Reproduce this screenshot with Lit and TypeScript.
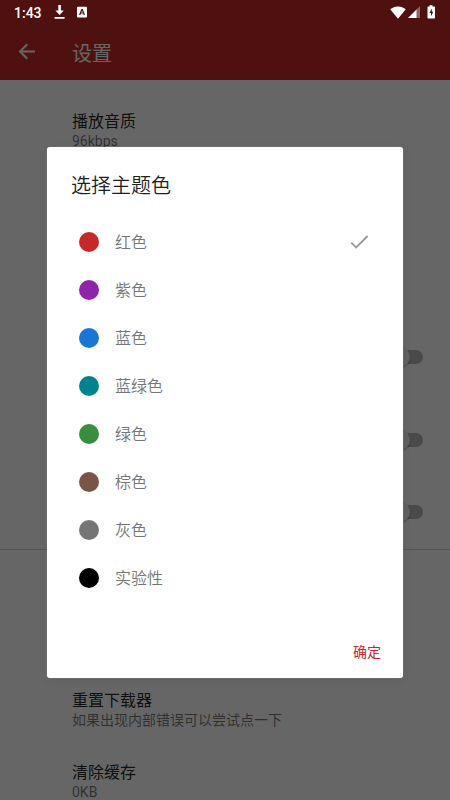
import { LitElement, html, css, nothing } from "lit";
import { customElement, property, state } from "lit/decorators.js";

interface ThemeColor {
  name: string;
  value: string;
}

const THEME_COLORS: ThemeColor[] = [
  { name: "红色", value: "#c62828" },
  { name: "紫色", value: "#8e24aa" },
  { name: "蓝色", value: "#1976d2" },
  { name: "蓝绿色", value: "#00838f" },
  { name: "绿色", value: "#388e3c" },
  { name: "棕色", value: "#795548" },
  { name: "灰色", value: "#757575" },
  { name: "实验性", value: "#000000" },
];

@customElement("status-bar")
class StatusBar extends LitElement {
  static styles = css`
    :host {
      display: flex;
      align-items: center;
      height: 24px;
      padding: 0 14px;
      color: #fff;
    }
    .time {
      font-size: 14px;
      font-weight: 500;
      line-height: 24px;
      width: 40px;
      padding-top: 2px;
    }
    .spacer {
      flex: 1;
    }
    svg {
      display: block;
      fill: currentColor;
    }
    .download {
      margin-right: 12px;
    }
    .wifi {
      margin-right: 2px;
    }
    .signal {
      margin-right: 7px;
    }
  `;
  render() {
    return html`
      <span class="time">1:43</span>
      <svg class="download" width="11" height="14" viewBox="0 0 11 14">
        <path d="M4.3 0h2.6v5.4h2.9L5.6 10 1.4 5.4h2.9zM.6 12h10v1.7H.6z" />
      </svg>
      <svg width="10" height="12" viewBox="0 0 10 12">
        <path
          fill-rule="evenodd"
          d="M1 .8h8a1 1 0 0 1 1 1v8.6a1 1 0 0 1-1 1H1a1 1 0 0 1-1-1V1.800a1 1 0 0 1 1-1zM4.300 3 2 9h1.400l.5-1.400h2.300L6.700 9H8L5.800 3zM5 4.400l.8 2.200H4.300z"
        />
      </svg>
      <span class="spacer"></span>
      <svg class="wifi" width="16" height="13" viewBox="0 0 16 13">
        <path d="M8 12.700.2 3.300C2.400 1.400 5 .4 8 .4s5.600 1 7.800 2.900z" />
      </svg>
      <svg class="signal" width="12" height="12" viewBox="0 0 12 12">
        <path opacity=".35" d="M12 0v12H8V4z" />
        <path d="M8.500 3.500V12H0z" />
      </svg>
      <svg width="9" height="14" viewBox="0 0 9 14">
        <path
          fill-rule="evenodd"
          d="M2.500.2h3v1.300h1.700a.8.8 0 0 1 .8.8v10.400a.8.8 0 0 1-.8.8H1.300a.8.8 0 0 1-.8-.8V2.300a.8.8 0 0 1 .8-.8h1.200zM4.800 3.600 2.400 8h1.600v3.200l2.400-4.400H4.800z"
        />
      </svg>
    `;
  }
}

@customElement("setting-row")
class SettingRow extends LitElement {
  @property() heading = "";
  @property() detail = "";
  @property({ type: Boolean }) toggle = false;

  static styles = css`
    :host {
      display: flex;
      align-items: center;
      justify-content: space-between;
      box-sizing: border-box;
      height: 72px;
      padding: 0 25px 0 72px;
    }
    .heading {
      padding-top: 1px;
      font-size: 16px;
      line-height: 20px;
      color: rgba(0, 0, 0, 0.87);
    }
    .detail {
      font-size: 14px;
      line-height: 19px;
      color: rgba(0, 0, 0, 0.54);
    }
    .track {
      display: flex;
      align-items: center;
      width: 34px;
      height: 14px;
      margin-right: 2px;
      border-radius: 7px;
      background: #b9b9b9;
    }
    .thumb {
      width: 20px;
      height: 20px;
      margin-left: 1px;
      flex: none;
      border-radius: 50%;
      background: #f1f1f1;
      box-shadow: 0 1px 2px rgba(0, 0, 0, 0.3);
    }
  `;
  render() {
    return html`
      <div>
        <div class="heading">${this.heading}</div>
        <div class="detail">${this.detail}</div>
      </div>
      ${this.toggle
        ? html`<div class="track"><div class="thumb"></div></div>`
        : nothing}
    `;
  }
}

@customElement("theme-dialog")
class ThemeDialog extends LitElement {
  @state() selected = 0;

  static styles = css`
    :host {
      display: flex;
      flex-direction: column;
      box-sizing: border-box;
      width: 356px;
      height: 531px;
      border-radius: 3px;
      background: #fff;
      box-shadow: 0 0 1px rgba(255, 255, 255, 0.5), 0 2px 10px rgba(0, 0, 0, 0.06);
    }
    .title {
      padding: 24px 24px 17px;
      font-size: 20px;
      font-weight: 350;
      line-height: 30px;
      color: #212121;
    }
    .option {
      display: flex;
      align-items: center;
      height: 48px;
      padding: 0 34px 0 32px;
    }
    .swatch {
      width: 20px;
      height: 20px;
      margin-right: 16px;
      border-radius: 50%;
    }
    .name {
      flex: 1;
      padding-top: 2px;
      font-size: 16px;
      font-weight: 350;
      line-height: 24px;
      color: #757575;
    }
    .check {
      fill: none;
      stroke: #999;
      stroke-width: 1.8;
    }
    .actions {
      display: flex;
      justify-content: flex-end;
      margin-top: auto;
      padding: 0 22px 15px;
    }
    .confirm {
      font-size: 14px;
      line-height: 22px;
      color: #c62828;
    }
  `;
  render() {
    return html`
      <div class="title">选择主题色</div>
      ${THEME_COLORS.map(
        (color, index) => html`
          <div class="option" @click=${() => (this.selected = index)}>
            <span class="swatch" style="background:${color.value}"></span>
            <span class="name">${color.name}</span>
            ${index === this.selected
              ? html`<svg class="check" width="19" height="14" viewBox="0 0 19 14">
                  <path d="M1.200 7.700 6.200 12.500 17.600 1" />
                </svg>`
              : nothing}
          </div>
        `
      )}
      <div class="actions"><span class="confirm">确定</span></div>
    `;
  }
}

@customElement("app-root")
class AppRoot extends LitElement {
  static styles = css`
    :host {
      display: block;
      position: relative;
      width: 450px;
      height: 800px;
      overflow: hidden;
      background: #fff;
      font-family: Roboto, "Noto Sans CJK SC", sans-serif;
    }
    .bar {
      display: flex;
      align-items: center;
      box-sizing: border-box;
      height: 80px;
      padding: 24px 18px 0;
      background: #c62828;
      color: #fff;
    }
    .back {
      width: 18px;
      height: 18px;
      margin-right: 36px;
      fill: none;
      stroke: currentColor;
      stroke-width: 2;
    }
    .heading {
      padding-top: 4px;
      font-size: 20px;
      line-height: 30px;
    }
    .list {
      display: flex;
      flex-direction: column;
      padding-top: 15px;
    }
    .group {
      margin-top: 154px;
    }
    .next {
      margin-top: 11px;
    }
    .divider {
      height: 1px;
      margin: 1px 0 124px;
      background: #d4d4d4;
    }
    .scrim {
      position: absolute;
      inset: 0;
      box-sizing: border-box;
      display: flex;
      justify-content: center;
      align-items: flex-start;
      padding-top: 146.5px;
      background: rgba(0, 0, 0, 0.6);
    }
    .status {
      position: absolute;
      inset: 0 0 auto;
    }
  `;
  render() {
    return html`
      <div class="bar">
        <svg class="back" viewBox="0 0 18 18">
          <path d="M17 8.500H2.200M9.300 1.200 2 8.500l7.300 7.300" />
        </svg>
        <span class="heading">设置</span>
      </div>
      <div class="list">
        <setting-row heading="播放音质" detail="96kbps"></setting-row>
        <setting-row class="group" toggle></setting-row>
        <setting-row class="next" toggle></setting-row>
        <setting-row toggle></setting-row>
        <div class="divider"></div>
        <setting-row heading="重置下载器" detail="如果出现内部错误可以尝试点一下"></setting-row>
        <setting-row heading="清除缓存" detail="0KB"></setting-row>
      </div>
      <div class="scrim"><theme-dialog></theme-dialog></div>
      <status-bar class="status"></status-bar>
    `;
  }
}
